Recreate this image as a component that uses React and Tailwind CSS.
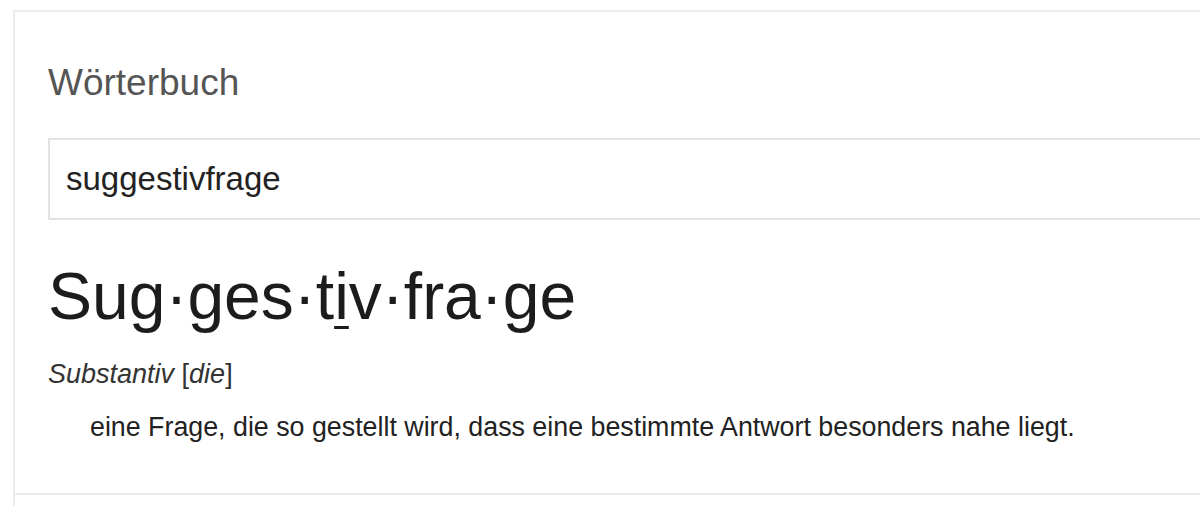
import React from 'react';

const font = { fontFamily: '"Liberation Sans", Arial, sans-serif' };

const Syllables = () => (
  <h1 className="text-[66px] leading-[66px] font-normal text-[#1c1c1c] mt-[43px]">
    Sug·ges·t<span className="underline decoration-[3px] underline-offset-[7px]">i</span>v·fra·ge
  </h1>
);

const App = () => {
  return (
    <div className="w-[1200px] h-[506px] overflow-hidden bg-white" style={font}>
      <div className="mt-[10px] ml-[13px] w-[1220px] border-l-2 border-t-2 border-[#ececec]">
        <div className="pl-[33px]">
          <h2 className="pt-[52px] text-[37px] leading-[37px] text-[#555]">Wörterbuch</h2>

          <div className="mt-[37px] h-[82px] flex items-center border-2 border-[#e2e2e2] pl-[16px]">
            <input
              readOnly
              value="suggestivfrage"
              className="w-full bg-transparent outline-none text-[33px] text-[#222]"
              style={font}
            />
          </div>

          <Syllables />

          <p className="mt-[32px] text-[27px] leading-[27px] text-[#333]">
            <i>Substantiv</i> [<i>die</i>]
          </p>

          <p className="mt-[26px] pl-[42px] text-[26.8px] leading-[27px] text-[#222]">
            eine Frage, die so gestellt wird, dass eine bestimmte Antwort besonders nahe liegt.
          </p>
        </div>

        <div className="mt-[52px] border-t-2 border-[#ececec] h-[20px]" />
      </div>
    </div>
  );
};

export default App;
